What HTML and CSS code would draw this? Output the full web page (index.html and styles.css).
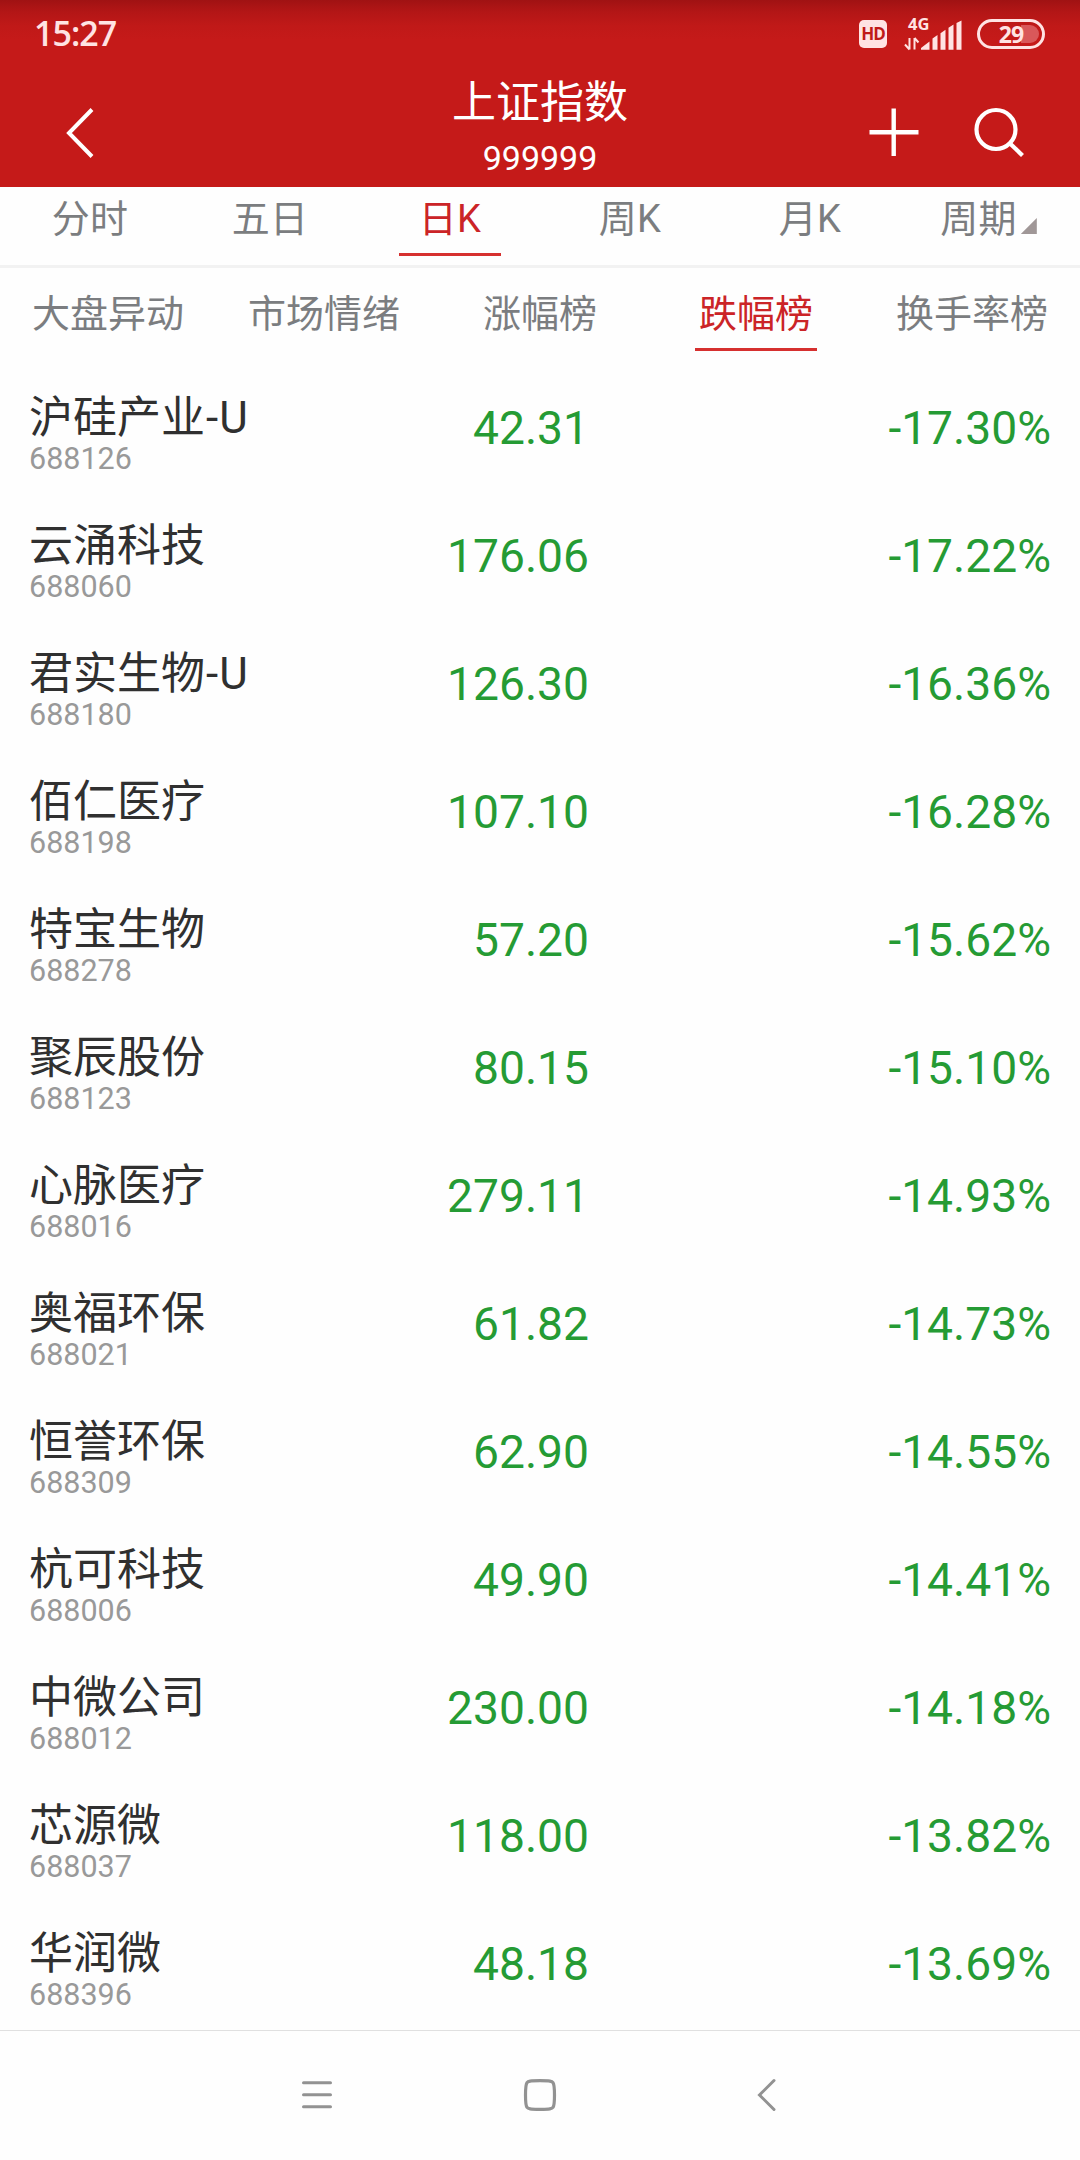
FILE: index.html
```html
<!DOCTYPE html>
<html lang="zh-CN">
<head>
    <meta charset="UTF-8">
    <title>上证指数</title>
    <link rel="stylesheet" href="styles.css">
</head>
<body>

<header class="header">
    <div class="status-bar">
        <span class="time">15:27</span>
        <div class="status-icons">
            <span class="hd">HD</span>
            <div class="signal">
                <span class="network">4G</span>
                <svg width="58" height="34" viewBox="0 0 58 34">
                    <path d="M5.500 21v11.500M1 27.500l4.500 5M10.500 32.500V21M10.500 21l4 4.500" fill="none" stroke="#ffe3e3" stroke-width="2"/>
                    <path d="M17 32.700v-1.700l8.500-6.500v8.200zM28.500 32.700V21.500l5-3.400v14.600zM36.500 32.700V16.200l5-3.400v19.900zM44.500 32.700V10.800l5-3.400v25.300zM52.500 32.700V6l5-2.500v29.200z" fill="#ffe3e3"/>
                </svg>
            </div>
            <div class="battery">
                <span class="battery-level"></span>
                <span class="battery-text">29</span>
            </div>
        </div>
    </div>
    <div class="title-bar">
        <svg class="icon-back" width="30" height="52" viewBox="0 0 30 52">
            <path d="M27 2.500L4 26l23 23.500" fill="none" stroke="#fff" stroke-width="4"/>
        </svg>
        <div class="title">
            <h1>上证指数</h1>
            <p>999999</p>
        </div>
        <div class="actions">
            <svg width="50" height="50" viewBox="0 0 50 50">
                <path d="M0.500 25.300h49M24.700 1.500v47.500" fill="none" stroke="#fff" stroke-width="4.400"/>
            </svg>
            <svg width="50" height="50" viewBox="0 0 50 50">
                <circle cx="22" cy="22.500" r="19.500" fill="none" stroke="#fff" stroke-width="4.200"/>
                <path d="M36 36.500l12.500 12" fill="none" stroke="#fff" stroke-width="4.200"/>
            </svg>
        </div>
    </div>
</header>

<nav class="tabs period-tabs">
    <a class="tab"><span>分时</span></a>
    <a class="tab"><span>五日</span></a>
    <a class="tab active"><span>日K</span></a>
    <a class="tab"><span>周K</span></a>
    <a class="tab"><span>月K</span></a>
    <a class="tab"><span>周期</span><i class="triangle"></i></a>
</nav>

<nav class="tabs rank-tabs">
    <a class="tab"><span>大盘异动</span></a>
    <a class="tab"><span>市场情绪</span></a>
    <a class="tab"><span>涨幅榜</span></a>
    <a class="tab active"><span>跌幅榜</span></a>
    <a class="tab"><span>换手率榜</span></a>
</nav>

<main class="stock-list">
    <div class="stock">
        <div class="stock-name"><b>沪硅产业<span class="suffix">-U</span></b><small>688126</small></div>
        <span class="price">42.31</span>
        <span class="change">-17.30%</span>
    </div>
    <div class="stock">
        <div class="stock-name"><b>云涌科技</b><small>688060</small></div>
        <span class="price">176.06</span>
        <span class="change">-17.22%</span>
    </div>
    <div class="stock">
        <div class="stock-name"><b>君实生物<span class="suffix">-U</span></b><small>688180</small></div>
        <span class="price">126.30</span>
        <span class="change">-16.36%</span>
    </div>
    <div class="stock">
        <div class="stock-name"><b>佰仁医疗</b><small>688198</small></div>
        <span class="price">107.10</span>
        <span class="change">-16.28%</span>
    </div>
    <div class="stock">
        <div class="stock-name"><b>特宝生物</b><small>688278</small></div>
        <span class="price">57.20</span>
        <span class="change">-15.62%</span>
    </div>
    <div class="stock">
        <div class="stock-name"><b>聚辰股份</b><small>688123</small></div>
        <span class="price">80.15</span>
        <span class="change">-15.10%</span>
    </div>
    <div class="stock">
        <div class="stock-name"><b>心脉医疗</b><small>688016</small></div>
        <span class="price">279.11</span>
        <span class="change">-14.93%</span>
    </div>
    <div class="stock">
        <div class="stock-name"><b>奥福环保</b><small>688021</small></div>
        <span class="price">61.82</span>
        <span class="change">-14.73%</span>
    </div>
    <div class="stock">
        <div class="stock-name"><b>恒誉环保</b><small>688309</small></div>
        <span class="price">62.90</span>
        <span class="change">-14.55%</span>
    </div>
    <div class="stock">
        <div class="stock-name"><b>杭可科技</b><small>688006</small></div>
        <span class="price">49.90</span>
        <span class="change">-14.41%</span>
    </div>
    <div class="stock">
        <div class="stock-name"><b>中微公司</b><small>688012</small></div>
        <span class="price">230.00</span>
        <span class="change">-14.18%</span>
    </div>
    <div class="stock">
        <div class="stock-name"><b>芯源微</b><small>688037</small></div>
        <span class="price">118.00</span>
        <span class="change">-13.82%</span>
    </div>
    <div class="stock">
        <div class="stock-name"><b>华润微</b><small>688396</small></div>
        <span class="price">48.18</span>
        <span class="change">-13.69%</span>
    </div>
</main>

<footer class="system-nav">
    <svg width="34" height="34" viewBox="0 0 34 34">
        <path d="M3.500 4.700h27M3.500 16.700h27M3.500 28.800h27" stroke="#929292" stroke-width="3" stroke-linecap="round"/>
    </svg>
    <svg width="34" height="34" viewBox="0 0 34 34">
        <path d="M17 2.700c10 0 12 .5 13 2s1.500 4 1.500 12.300-.5 11-1.500 12.400-3 1.900-13 1.900-12-.5-13-1.900-1.500-4.100-1.500-12.400.5-10.800 1.500-12.300 3-2 13-2z" fill="none" stroke="#929292" stroke-width="3.200"/>
    </svg>
    <svg width="34" height="34" viewBox="0 0 34 34">
        <path d="M28 2.500L13.500 17 28 31.500" fill="none" stroke="#929292" stroke-width="3" stroke-linecap="round"/>
    </svg>
</footer>

</body>
</html>
```

FILE: styles.css
```css
* {
    box-sizing: border-box;
}
body {
    margin: 0;
    width: 1080px;
    height: 2160px;
    display: flex;
    flex-direction: column;
    overflow: hidden;
    font-family: Roboto, "Noto Sans CJK SC", sans-serif;
    background: #fefefe;
}
svg {
    display: block;
}

/* header */
.header {
    height: 187px;
    background: linear-gradient(180deg, #a01213 0, #b31616 12px, #c01918 26px, #c51a19 40px);
    color: white;
}
.status-bar {
    height: 67px;
    padding: 0 35px 0 34px;
    display: flex;
    justify-content: space-between;
    align-items: center;
    color: #ffe3e3;
}
.time {
    font-family: "Open Sans", sans-serif;
    font-size: 34px;
    font-weight: 600;
    line-height: 67px;
    letter-spacing: -1px;
}
.status-icons {
    display: flex;
    align-items: center;
}
.hd {
    width: 28px;
    height: 28px;
    margin-right: 17px;
    border-radius: 5px;
    background: #ffe3e3;
    color: #c01918;
    font-family: "Open Sans", sans-serif;
    font-size: 17px;
    font-weight: 700;
    line-height: 28px;
    letter-spacing: -1px;
    text-align: center;
}
.signal {
    position: relative;
    margin-right: 15px;
}
.network {
    position: absolute;
    top: -5px;
    left: 4px;
    font-family: "Open Sans", sans-serif;
    font-size: 16.500px;
    font-weight: 700;
    line-height: 24px;
}
.battery {
    position: relative;
    width: 68px;
    height: 30px;
    border: 3px solid #ffe3e3;
    border-radius: 15px;
    text-align: center;
}
.battery-level {
    position: absolute;
    top: 3px;
    right: 3px;
    width: 18px;
    height: 18px;
    border-radius: 0 9px 9px 0;
    background: #d9585a;
}
.battery-text {
    position: relative;
    font-family: "Open Sans", sans-serif;
    font-size: 23px;
    font-weight: 700;
    line-height: 24px;
    letter-spacing: -1px;
}
.title-bar {
    height: 120px;
    padding: 0 56px 0 65px;
    display: grid;
    grid-template-columns: 275px 400px 1fr;
}
.icon-back {
    margin-top: 40px;
}
.title {
    text-align: center;
}
.title h1 {
    margin: 8px 0 0;
    font-size: 44px;
    font-weight: 400;
    line-height: 56px;
}
.title p {
    margin: 7px 0 0;
    font-size: 34px;
    line-height: 40px;
}
.actions {
    padding-top: 40px;
    display: flex;
    justify-content: flex-end;
    gap: 55px;
}

/* tabs */
.tabs {
    display: flex;
    font-size: 38px;
    color: #7b7d80;
}
.tab {
    flex: 1;
    display: flex;
    justify-content: center;
}
.tab.active {
    color: #cb2427;
}
.tab.active span {
    border-bottom: 3px solid #d6302f;
}
.period-tabs {
    height: 81px;
    border-bottom: 3px solid #f2f2f2;
}
.period-tabs span {
    height: 69px;
    line-height: 64px;
    letter-spacing: 0.300px;
}
.period-tabs .active span {
    padding: 0 20px;
}
.triangle {
    width: 16px;
    height: 16px;
    margin: 31px 3px 0 4px;
    background: #a09797;
    clip-path: polygon(100% 0, 100% 100%, 0 100%);
}
.rank-tabs {
    height: 98px;
}
.rank-tabs span {
    height: 83px;
    line-height: 92px;
}
.rank-tabs .active span {
    padding: 0 4px;
}

/* stocks */
.stock {
    height: 128px;
    padding: 0 29px;
    display: grid;
    grid-template-columns: 300px 260px 1fr;
    text-align: right;
}
.stock-name {
    padding-top: 26px;
    text-align: left;
}
.stock-name b {
    display: block;
    font-size: 44px;
    font-weight: 400;
    line-height: 52px;
    color: #303030;
}
.suffix {
    margin-left: 1px;
    letter-spacing: 1px;
}
.stock-name small {
    display: block;
    margin-top: -2px;
    font-size: 30.500px;
    line-height: 34px;
    color: #999;
}
.price, .change {
    font-size: 46.200px;
    line-height: 125px;
    color: #259b34;
}

/* android buttons */
.system-nav {
    flex: 1;
    padding-top: 47px;
    border-top: 1px solid #e0e0e0;
    display: flex;
    justify-content: center;
    gap: 189px;
}
```
